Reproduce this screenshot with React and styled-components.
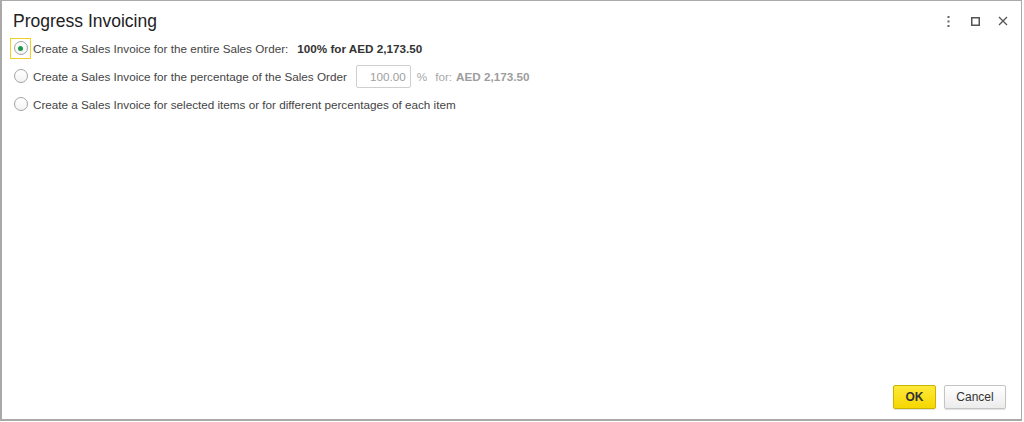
import React, { useState } from "react";
import styled, { createGlobalStyle } from "styled-components";

const GlobalStyle = createGlobalStyle`
  html, body {
    margin: 0;
    padding: 0;
    background: #ffffff;
  }
  body {
    font-family: "Liberation Sans", Arial, sans-serif;
  }
`;

const Window = styled.div`
  box-sizing: border-box;
  width: 1022px;
  height: 421px;
  border: 1px solid #a9a9a9;
  border-left-width: 2px;
  border-bottom-width: 2px;
  display: flex;
  flex-direction: column;
  background: #fff;
`;

const Header = styled.div`
  display: flex;
  align-items: center;
  height: 36px;
  padding: 0 5px 0 11px;
`;

const Title = styled.h1`
  margin: 0;
  flex: 1;
  font-size: 17.5px;
  font-weight: normal;
  color: #222;
  padding-top: 4px;
`;

const HeaderButton = styled.button`
  width: 27px;
  height: 24px;
  margin-top: 4px;
  border: none;
  background: none;
  padding: 0;
  display: flex;
  align-items: center;
  justify-content: center;
  color: #555;
`;

const Body = styled.div`
  flex: 1;
  display: flex;
  flex-direction: column;
  gap: 6px;
  padding: 0 0 0 8px;
`;

const Row = styled.label`
  display: flex;
  align-items: center;
  height: 22px;
  font-size: 11.7px;
  color: #444;
`;

const RadioFocus = styled.span`
  box-sizing: border-box;
  width: 21px;
  height: 21px;
  display: flex;
  align-items: center;
  justify-content: center;
  border: 1px solid ${(p) => (p.focused ? "#f2cf27" : "transparent")};
  margin-right: 2px;
`;

const RadioCircle = styled.span`
  box-sizing: border-box;
  width: 14px;
  height: 14px;
  border-radius: 50%;
  border: 1px solid #a3a3a3;
  background: linear-gradient(#ffffff, #f3f3f3);
  display: flex;
  align-items: center;
  justify-content: center;

  &::after {
    content: "";
    width: 5px;
    height: 5px;
    border-radius: 50%;
    background: ${(p) => (p.checked ? "#1b9a48" : "transparent")};
  }
`;

const Amount = styled.span`
  font-weight: bold;
  color: ${(p) => (p.muted ? "#9d9d9d" : "#333")};
  margin-left: ${(p) => p.gap || 0}px;
`;

const PercentInput = styled.input`
  box-sizing: border-box;
  width: 55px;
  height: 23px;
  margin-left: 9px;
  border: 1px solid #cfcfcf;
  border-radius: 2px;
  text-align: right;
  padding: 0 4px;
  font: 11.7px "Liberation Sans", Arial, sans-serif;
  color: #a0a0a0;
  background: #fff;
`;

const Muted = styled.span`
  color: #a8a8a8;
  margin-left: ${(p) => p.gap || 0}px;
`;

const Footer = styled.div`
  display: flex;
  justify-content: flex-end;
  gap: 8px;
  padding: 0 15px 10px 0;
`;

const Button = styled.button`
  box-sizing: border-box;
  height: 24px;
  width: ${(p) => (p.primary ? 43 : 62)}px;
  padding: 0;
  border-radius: 2px;
  font: 12px "Liberation Sans", Arial, sans-serif;
  font-weight: ${(p) => (p.primary ? "bold" : "normal")};
  color: #333;
  border: 1px solid ${(p) => (p.primary ? "#c9b300" : "#c4c4c4")};
  background: ${(p) =>
    p.primary
      ? "linear-gradient(#ffe93a, #f5d700)"
      : "linear-gradient(#ffffff, #ececec)"};
  box-shadow: 0 1px 1px rgba(0, 0, 0, 0.12);
`;

const App = () => {
  const [choice, setChoice] = useState("entire");

  return (
    <>
      <GlobalStyle />
      <Window>
        <Header>
          <Title>Progress Invoicing</Title>
          <HeaderButton aria-label="More">
            <svg width="3" height="11" viewBox="0 0 3 11">
              <rect x="0.5" y="0" width="2" height="2" fill="#666" />
              <rect x="0.5" y="4.5" width="2" height="2" fill="#666" />
              <rect x="0.5" y="9" width="2" height="2" fill="#666" />
            </svg>
          </HeaderButton>
          <HeaderButton aria-label="Maximize">
            <svg width="9" height="9" viewBox="0 0 9 9">
              <rect x="0.75" y="0.75" width="7.5" height="7.5" fill="none" stroke="#555" strokeWidth="1.5" />
            </svg>
          </HeaderButton>
          <HeaderButton aria-label="Close">
            <svg width="10" height="10" viewBox="0 0 10 10">
              <path d="M1 1 L9 9 M9 1 L1 9" stroke="#555" strokeWidth="1.3" />
            </svg>
          </HeaderButton>
        </Header>
        <Body>
          <Row onClick={() => setChoice("entire")}>
            <RadioFocus focused={choice === "entire"}>
              <RadioCircle checked={choice === "entire"} />
            </RadioFocus>
            Create a Sales Invoice for the entire Sales Order:
            <Amount gap={9}>100% for AED 2,173.50</Amount>
          </Row>
          <Row onClick={() => setChoice("percent")}>
            <RadioFocus focused={choice === "percent"}>
              <RadioCircle checked={choice === "percent"} />
            </RadioFocus>
            Create a Sales Invoice for the percentage of the Sales Order
            <PercentInput defaultValue="100.00" disabled={choice !== "percent"} />
            <Muted gap={6}>%</Muted>
            <Muted gap={8}>for:</Muted>
            <Amount muted gap={4}>AED 2,173.50</Amount>
          </Row>
          <Row onClick={() => setChoice("items")}>
            <RadioFocus focused={choice === "items"}>
              <RadioCircle checked={choice === "items"} />
            </RadioFocus>
            Create a Sales Invoice for selected items or for different percentages of each item
          </Row>
        </Body>
        <Footer>
          <Button primary>OK</Button>
          <Button>Cancel</Button>
        </Footer>
      </Window>
    </>
  );
};

export default App;
